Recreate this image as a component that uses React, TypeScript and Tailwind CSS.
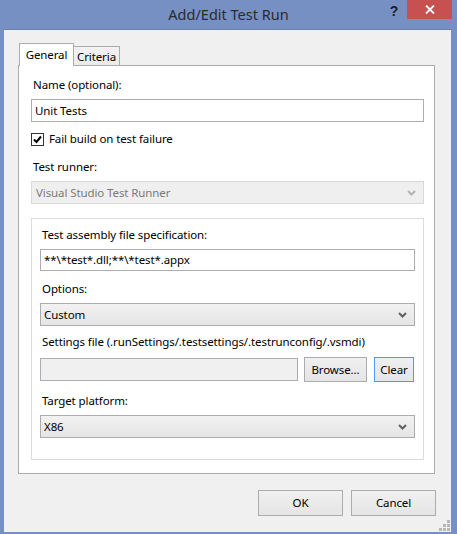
import React from "react";

const font = { fontFamily: '"Noto Sans", "Liberation Sans", sans-serif' };

function Chevron({ color }: { color: string }) {
  return (
    <svg width="9" height="6" viewBox="0 0 9 6" className="shrink-0">
      <path d="M1 1 L4.5 4.5 L8 1" fill="none" stroke={color} strokeWidth="2" />
    </svg>
  );
}

function Combo({ text, disabled }: { text: string; disabled?: boolean }) {
  return disabled ? (
    <div className="h-[23px] flex items-center justify-between pl-[4px] pr-[7px] border border-[#d9d9d9] bg-[#efefef] text-[#7a7a7a]">
      <span>{text}</span>
      <Chevron color="#b4b4b4" />
    </div>
  ) : (
    <div className="h-[23px] flex items-center justify-between pl-[3px] pr-[7px] border border-[#acacac] bg-gradient-to-b from-[#f2f2f2] to-[#e5e5e5] text-black">
      <span>{text}</span>
      <Chevron color="#606060" />
    </div>
  );
}

function Label({ children, className = "" }: { children: React.ReactNode; className?: string }) {
  return <div className={"h-[16px] leading-[16px] pl-[2px] text-black " + className}>{children}</div>;
}

function Btn({ children, className = "" }: { children: React.ReactNode; className?: string }) {
  return (
    <div
      className={
        "flex items-center justify-center border bg-gradient-to-b from-[#f0f0f0] to-[#e5e5e5] text-black " + className
      }
    >
      {children}
    </div>
  );
}

export default function App() {
  return (
    <div className="w-[457px] h-[534px] bg-[#7690c4] flex flex-col text-[11.5px] tracking-[-0.1px] overflow-hidden" style={font}>
      {/* title bar */}
      <div className="h-[29px] grid grid-cols-[1fr_auto_1fr] shrink-0">
        <div />
        <div className="text-[14.5px] leading-[28px] text-[#2b2b2b] tracking-[0px]">Add/Edit Test Run</div>
        <div className="flex justify-end items-start">
          <div className="w-[26px] h-[19px] flex items-center justify-center text-[#1e1e1e] font-bold text-[14px] leading-none mt-[1px]" style={{ fontFamily: '"Liberation Sans", sans-serif' }}>?</div>
          <div className="w-[45px] h-[19px] bg-[#c75050] flex items-center justify-center mr-[5px]">
            <svg width="10" height="9" viewBox="0 0 10 9">
              <path d="M1 0.5 L9 8.5 M9 0.5 L1 8.5" stroke="white" strokeWidth="1.8" />
            </svg>
          </div>
        </div>
      </div>

      {/* client */}
      <div className="relative ml-[4px] mr-[6px] mb-[2px] flex-1 bg-[#f0f0f0] border-t border-[#6b7fae] flex flex-col pl-[14px] pr-[15px] pt-[13px]">
        {/* tabs */}
        <div className="flex items-end h-[22px] relative z-10 pl-[1px]">
          <div className="h-[23px] w-[55px] -mb-px bg-white border border-b-0 border-[#acacac] flex items-start justify-center pt-[3px] leading-[16px]">
            General
          </div>
          <div className="h-[19px] w-[46px] bg-gradient-to-b from-[#f2f2f2] to-[#ebebeb] border border-l-0 border-b-0 border-[#acacac] flex items-center justify-center leading-[16px] pt-px">
            Criteria
          </div>
        </div>
        {/* panel */}
        <div className="w-[417px] h-[409px] bg-white border border-[#acacac] pl-[12px] pr-[10px] pt-[11px] flex flex-col">
          <Label>Name (optional):</Label>
          <div className="mt-[6px] h-[23px] border border-[#abadb3] flex items-center pl-[3px] text-black">Unit Tests</div>
          <div className="mt-[9px] h-[16px] flex items-center">
            <div className="w-[13px] h-[13px] border border-[#333333] bg-white flex items-center justify-center">
              <svg width="9" height="9" viewBox="0 0 9 9">
                <path d="M1 4.5 L3.5 7 L8 1.5" fill="none" stroke="#000" strokeWidth="2" />
              </svg>
            </div>
            <span className="ml-[5px] leading-[16px]">Fail build on test failure</span>
          </div>
          <Label className="mt-[12px]">Test runner:</Label>
          <div className="mt-[6px]">
            <Combo text="Visual Studio Test Runner" disabled />
          </div>

          {/* group */}
          <div className="mt-[14px] border border-[#dcdcdc] pl-[8px] pr-[8px] pt-[8px] pb-[21px] flex flex-col">
            <Label>Test assembly file specification:</Label>
            <div className="mt-[6px] h-[22px] border border-[#abadb3] flex items-center pl-[3px]">**\*test*.dll;**\*test*.appx</div>
            <Label className="mt-[10px]">Options:</Label>
            <div className="mt-[6px]">
              <Combo text="Custom" />
            </div>
            <Label className="mt-[8px]">Settings file (.runSettings/.testsettings/.testrunconfig/.vsmdi)</Label>
            <div className="mt-[7px] flex items-center">
              <div className="w-[258px] h-[23px] border border-[#abadb3] bg-[#f0f0f0]" />
              <Btn className="ml-[6px] w-[63px] h-[25px] border-[#acacac]">Browse...</Btn>
              <Btn className="ml-[7px] w-[40px] h-[25px] border-[#4a9ce6]">Clear</Btn>
            </div>
            <Label className="mt-[11px]">Target platform:</Label>
            <div className="mt-[6px]">
              <Combo text="X86" />
            </div>
          </div>
        </div>

        {/* buttons */}
        <div className="mt-[16px] flex justify-end gap-[8px]">
          <Btn className="w-[85px] h-[26px] border-[#acacac]">OK</Btn>
          <Btn className="w-[85px] h-[26px] border-[#acacac]">Cancel</Btn>
        </div>

        {/* resize grip */}
        <svg className="absolute right-[1px] bottom-[1px]" width="11" height="11" viewBox="0 0 11 11">
          {[
            [8, 0],
            [4, 4],
            [8, 4],
            [0, 8],
            [4, 8],
            [8, 8],
          ].map(([x, y], i) => (
            <rect key={i} x={x} y={y} width="3" height="3" fill="#b8b8b8" />
          ))}
        </svg>
      </div>
    </div>
  );
}
